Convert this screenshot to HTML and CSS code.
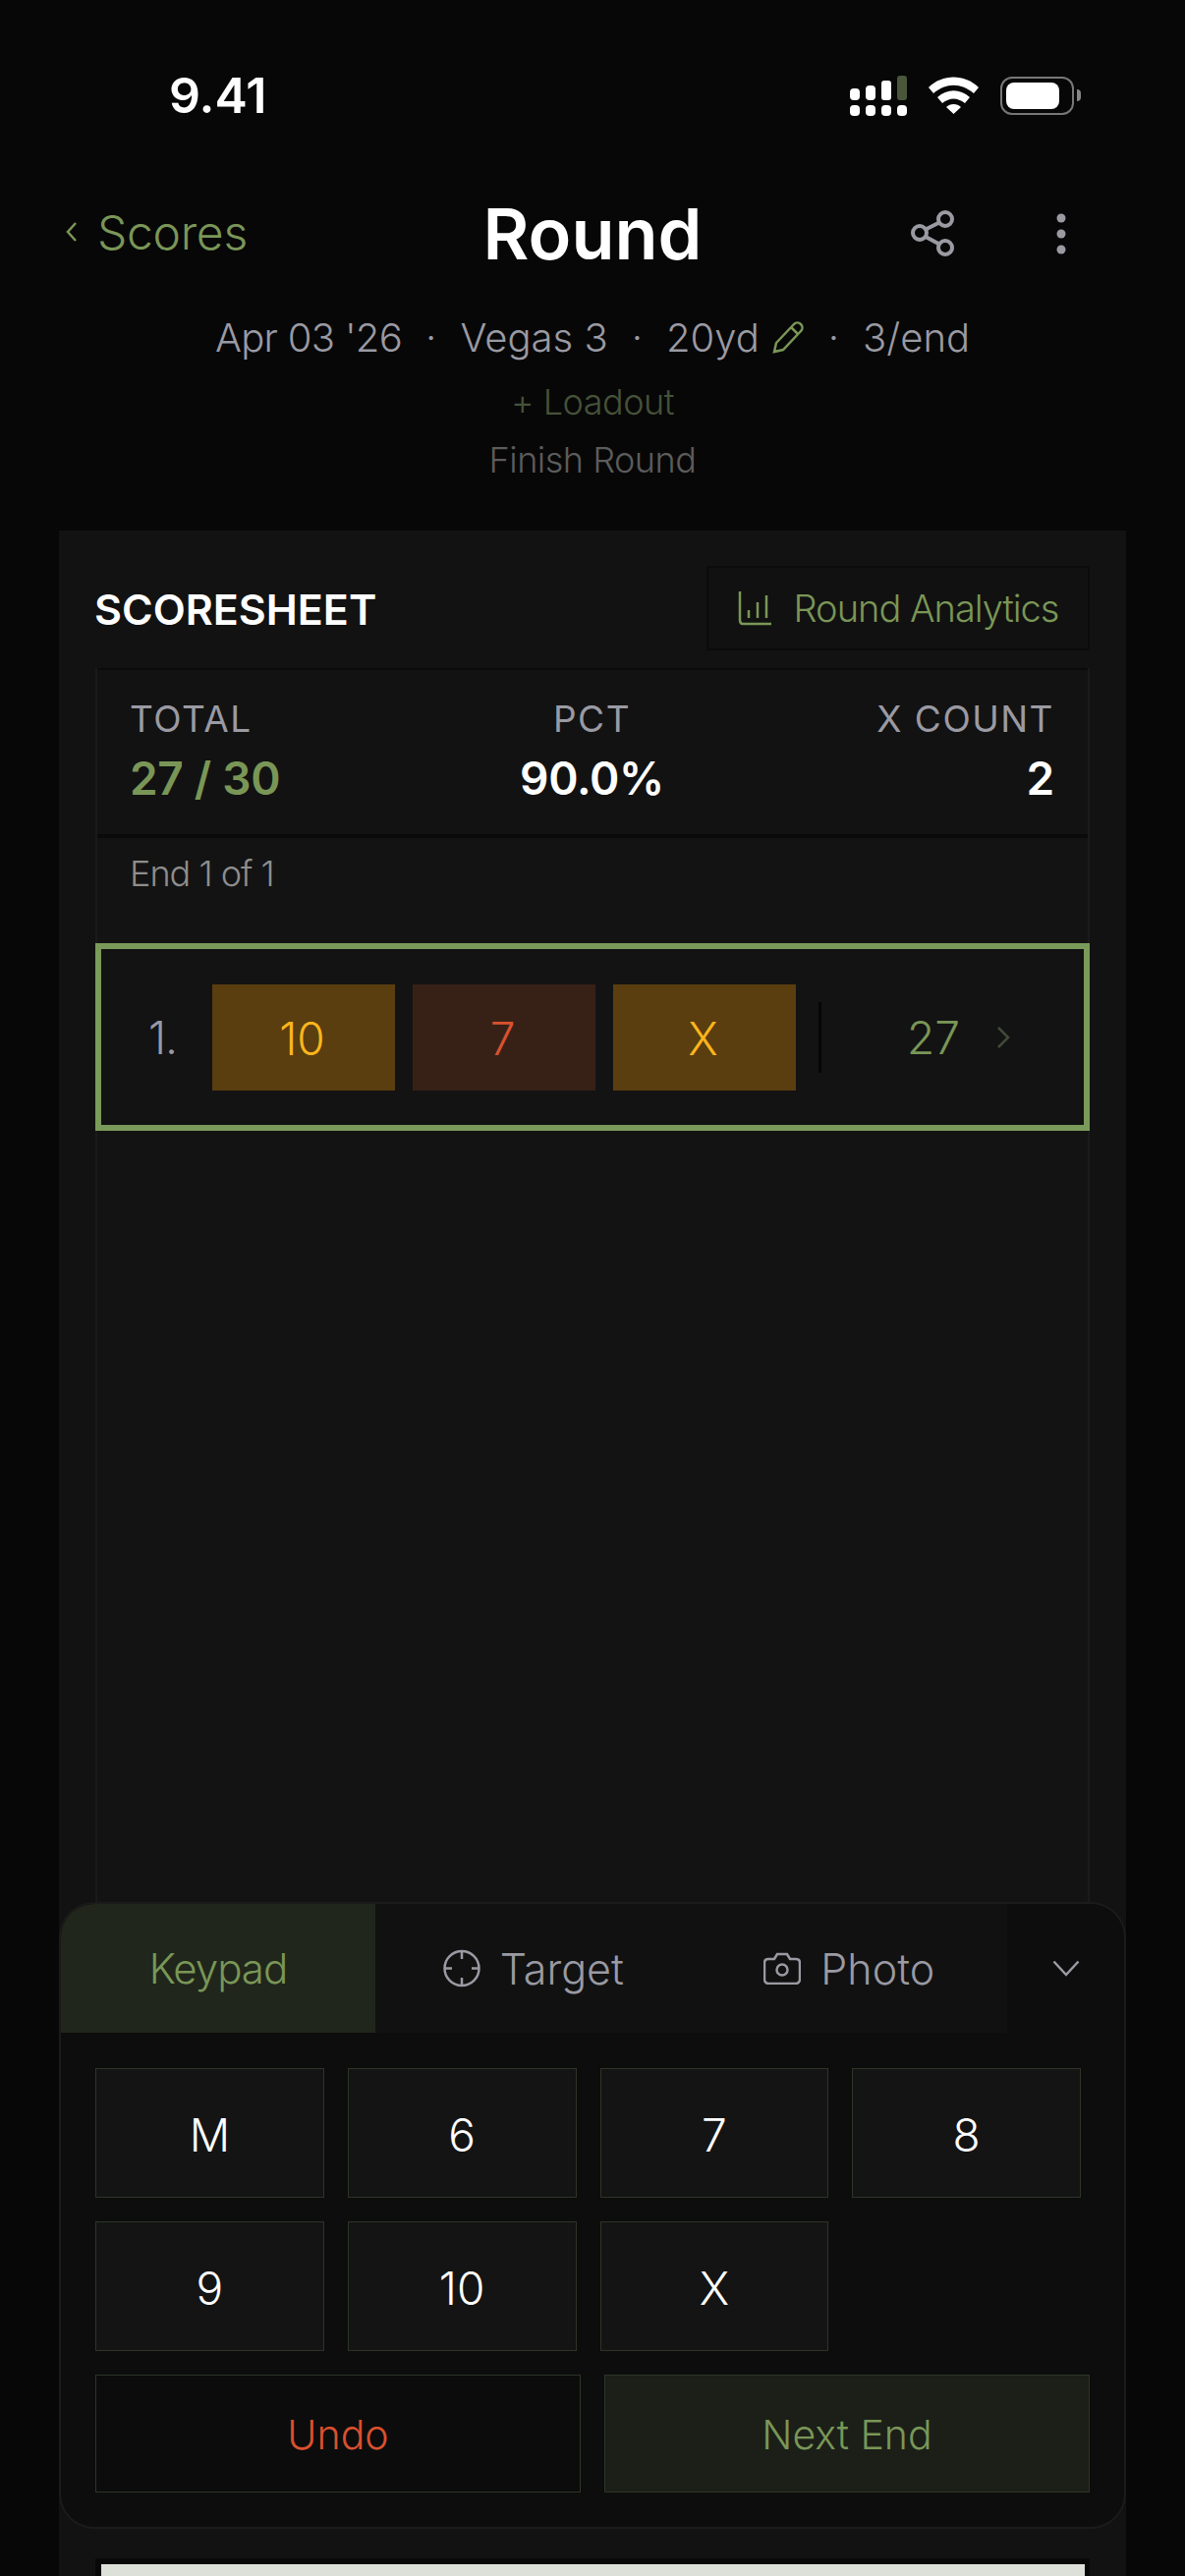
FILE: index.html
```html
<!DOCTYPE html>
<html lang="en">
<head>
    <meta charset="UTF-8">
    <meta name="viewport" content="width=device-width, initial-scale=1.0">
    <title>Round</title>
    <link rel="stylesheet" href="styles.css">
</head>
<body>
    <header class="status">
        <span class="clock">9.41</span>
        <div class="status-icons">
            <svg class="signal" width="58" height="41" viewBox="0 0 58 41">
                <rect x="0" y="13" width="10" height="12" rx="4" fill="#fff"/>
                <rect x="16" y="10" width="10" height="15" rx="4" fill="#fff"/>
                <rect x="32" y="5" width="10" height="20" rx="3" fill="#fff"/>
                <rect x="48" y="0" width="10" height="25" rx="3" fill="#4a573b"/>
                <rect x="0" y="30" width="10" height="11" rx="4" fill="#fff"/>
                <rect x="16" y="30" width="10" height="11" rx="4" fill="#fff"/>
                <rect x="32" y="30" width="10" height="11" rx="4" fill="#fff"/>
                <rect x="48" y="30" width="10" height="11" rx="4" fill="#fff"/>
            </svg>
            <svg class="wifi" width="51" height="38" viewBox="0 0 51 38">
                <path d="M0 11 C14 -3 37 -3 51 11 L46 17 C33 6 18 6 5 17 Z" fill="#fff"/>
                <path d="M9 21 C19 12 32 12 42 21 L37 27 C29 21 22 21 14 27 Z" fill="#fff"/>
                <path d="M18 31 C22 27 29 27 33 31 L25.500 38 Z" fill="#fff"/>
            </svg>
            <div class="battery">
                <div class="battery-body"><div class="battery-fill"></div></div>
                <div class="battery-tip"></div>
            </div>
        </div>
    </header>

    <nav class="topbar">
        <a class="back">
            <svg width="14" height="22" viewBox="0 0 14 22" fill="none"><path d="M11 2 L3 11 L11 20" stroke="#7a9657" stroke-width="2.500"/></svg>
            Scores
        </a>
        <h1 class="title">Round</h1>
        <div class="actions">
            <svg width="46" height="47" viewBox="0 0 46 47" fill="none" stroke="#9a9aa3" stroke-width="4">
                <circle cx="35" cy="9" r="7"/>
                <circle cx="9" cy="23" r="7"/>
                <circle cx="35" cy="38" r="7"/>
                <path d="M15 19.500 L29 12.500 M15 27 L29 34.500"/>
            </svg>
            <svg width="10" height="42" viewBox="0 0 10 42" fill="#9a9aa3">
                <circle cx="5" cy="5" r="4.500"/>
                <circle cx="5" cy="21" r="4.500"/>
                <circle cx="5" cy="37" r="4.500"/>
            </svg>
        </div>
    </nav>

    <div class="meta">
        <span class="date">Apr 03 '26</span><span class="sep">·</span>
        <span>Vegas 3</span><span class="sep">·</span>
        <span>20yd</span>
        <svg class="pencil" width="34" height="34" viewBox="0 0 34 34" fill="none" stroke="#7a9657" stroke-width="2.500">
            <path d="M3 31 L5 22 L23 3 C25 1 28 1 30 3 C32 5 32 8 30 10 L12 29 Z"/>
            <path d="M20 6 L27 13"/>
        </svg>
        <span class="sep">·</span><span>3/end</span>
    </div>
    <div class="loadout">+ Loadout</div>
    <div class="finish">Finish Round</div>

    <main class="card">
        <div class="card-head">
            <h2>SCORESHEET</h2>
            <button class="analytics">
                <svg width="35" height="36" viewBox="0 0 35 36" fill="none" stroke="#7a9657" stroke-width="2.500">
                    <path d="M2 1 V30 C2 32 3 34 5 34 H34"/>
                    <path d="M11 20 V28 M20 12 V28 M29 5 V28"/>
                </svg>
                Round Analytics
            </button>
        </div>

        <section class="sheet">
            <div class="summary">
                <div class="stat">
                    <span class="stat-label">TOTAL</span>
                    <span class="stat-value green">27 / 30</span>
                </div>
                <div class="stat center">
                    <span class="stat-label">PCT</span>
                    <span class="stat-value">90.0%</span>
                </div>
                <div class="stat right">
                    <span class="stat-label">X COUNT</span>
                    <span class="stat-value">2</span>
                </div>
            </div>
            <p class="end-label">End 1 of 1</p>
            <div class="end-row">
                <span class="end-num">1.</span>
                <div class="arrows">
                    <span class="arrow gold">10</span>
                    <span class="arrow red">7</span>
                    <span class="arrow gold">X</span>
                </div>
                <span class="divider"></span>
                <span class="end-total">27</span>
                <svg class="end-chev" width="16" height="24" viewBox="0 0 16 24" fill="none"><path d="M3 2 L13 12 L3 22" stroke="#414b37" stroke-width="2.500"/></svg>
            </div>
        </section>

        <section class="panel">
            <div class="tabs">
                <div class="tab active">Keypad</div>
                <div class="tab">
                    <svg width="38" height="39" viewBox="0 0 38 39" fill="none" stroke="#9a9aa3" stroke-width="2.500">
                        <circle cx="19" cy="19.500" r="17.500"/>
                        <path d="M19 2 V10 M19 29 V37 M2 19.500 H9 M29 19.500 H36"/>
                    </svg>
                    Target
                </div>
                <div class="tab">
                    <svg width="38" height="33" viewBox="0 0 38 33" fill="none" stroke="#9a9aa3" stroke-width="2.500">
                        <path d="M5 7 H11 L14 2 H24 L27 7 H33 C35 7 37 8 37 11 V28 C37 30 35 32 33 32 H5 C3 32 1 30 1 28 V11 C1 8 3 7 5 7 Z"/>
                        <circle cx="19" cy="18" r="5.500"/>
                    </svg>
                    Photo
                </div>
                <div class="tab-toggle">
                    <svg width="28" height="17" viewBox="0 0 28 17" fill="none"><path d="M1.500 1.500 L14 15 L26.500 1.500" stroke="#9a9aa3" stroke-width="2.500"/></svg>
                </div>
            </div>
            <div class="keys">
                <button class="key">M</button>
                <button class="key">6</button>
                <button class="key">7</button>
                <button class="key">8</button>
                <button class="key">9</button>
                <button class="key">10</button>
                <button class="key">X</button>
            </div>
            <div class="panel-actions">
                <button class="undo">Undo</button>
                <button class="next">Next End</button>
            </div>
        </section>

        <div class="photo"><div class="photo-paper"></div></div>
    </main>
</body>
</html>
```

FILE: styles.css
```css
* {
    box-sizing: border-box;
}

body {
    margin: 0;
    height: 2622px;
    overflow: hidden;
    background-color: #070707;
    font-family: Inter, "Noto Sans", sans-serif;
    font-weight: 300;
    color: #9a9aa3;
}

button {
    font-family: inherit;
    font-weight: 300;
    cursor: pointer;
}

/* status bar */
.status {
    height: 194px;
    display: flex;
    justify-content: space-between;
    align-items: center;
    padding: 0 106px 0 172px;
}

.clock {
    font-size: 50px;
    font-weight: 600;
    color: #fff;
}

.status-icons {
    display: flex;
    align-items: center;
    gap: 22px;
}

.battery {
    display: flex;
    align-items: center;
    gap: 3px;
}

.battery-body {
    width: 75px;
    height: 39px;
    padding: 4px 13px 4px 4px;
    border: 2px solid #777;
    border-radius: 12px;
}

.battery-fill {
    height: 100%;
    background-color: #fff;
    border-radius: 8px;
}

.battery-tip {
    width: 4px;
    height: 12px;
    background-color: #888;
    border-radius: 0 4px 4px 0;
}

/* title row */
.topbar {
    height: 86px;
    display: grid;
    grid-template-columns: 1fr auto 1fr;
    align-items: center;
    padding: 0 66px;
}

.back {
    display: flex;
    align-items: center;
    gap: 19px;
    padding-bottom: 3px;
    font-size: 48px;
    letter-spacing: -0.3px;
    color: #7a9657;
}

.title {
    margin: 0;
    font-size: 72px;
    font-weight: 600;
    color: #fff;
}

.actions {
    display: flex;
    justify-content: flex-end;
    align-items: center;
    gap: 102px;
    padding-right: 55px;
}

.meta {
    margin-top: 34px;
    height: 60px;
    display: flex;
    justify-content: center;
    align-items: center;
    font-size: 40px;
    line-height: 60px;
}

.date {
    letter-spacing: -0.7px;
}

.sep {
    margin: 0 24px;
}

.pencil {
    margin-left: 12px;
}

.loadout {
    margin-top: 10px;
    text-align: center;
    font-size: 36px;
    line-height: 50px;
    letter-spacing: -0.5px;
    color: #465239;
}

.finish {
    margin-top: 9px;
    text-align: center;
    font-size: 36px;
    line-height: 50px;
    letter-spacing: -0.5px;
    color: #5c5c5c;
}

/* scoresheet card */
.card {
    margin: 47px 60px 0;
    padding-top: 36px;
    background-color: #121212;
}

.card-head {
    height: 86px;
    margin: 0 37px 18px;
    display: flex;
    justify-content: space-between;
    align-items: center;
}

.card-head h2 {
    margin: 2px 0 0 -1px;
    font-size: 43px;
    font-weight: 600;
    color: #fff;
}

.analytics {
    width: 390px;
    height: 86px;
    display: flex;
    align-items: center;
    justify-content: center;
    gap: 22px;
    background-color: #111;
    border: 2px solid #0b0b0b;
    font-size: 38px;
    letter-spacing: -1px;
    color: #7a9657;
}

.sheet {
    height: 1256px;
    margin: 0 37px;
    background-color: #131313;
    border: solid #1a1a1a;
    border-width: 0 2px;
}

.summary {
    height: 173px;
    padding: 28px 34px 0 33px;
    display: grid;
    grid-template-columns: 1fr 1fr 1fr;
    background-color: #121212;
    border-top: 2px solid #0b0b0b;
    border-bottom: 4px solid #0a0a0a;
}

.stat {
    display: flex;
    flex-direction: column;
    gap: 10px;
}

.stat.center {
    text-align: center;
}

.stat.right {
    text-align: right;
}

.stat-label {
    font-size: 37px;
    font-weight: 400;
    line-height: 44px;
    letter-spacing: 1.500px;
}

.stat-value {
    font-size: 46px;
    font-weight: 600;
    line-height: 56px;
    letter-spacing: -0.3px;
    color: #fff;
}

.stat-value.green {
    color: #7a9657;
}

.end-label {
    margin: 0;
    height: 107px;
    padding: 11px 33px 0;
    font-size: 36px;
    line-height: 50px;
    letter-spacing: -1px;
    color: #8e8e8e;
}

.end-row {
    height: 191px;
    margin: 0 -2px;
    display: flex;
    align-items: center;
    padding-left: 48px;
    border: 6px solid #7a9a5a;
    background-color: #131313;
}

.end-num {
    width: 65px;
    font-size: 46px;
    letter-spacing: -1px;
    color: #9a9aa3;
}

.arrows {
    display: flex;
    gap: 18px;
}

.arrow {
    width: 186px;
    height: 108px;
    display: flex;
    align-items: center;
    justify-content: center;
    padding: 3px 3px 0 0;
    font-size: 46px;
}

.arrow.gold {
    background-color: #5a3e10;
    color: #fdb51c;
}

.arrow.red {
    background-color: #372117;
    color: #d9512f;
}

.divider {
    width: 3px;
    height: 72px;
    margin-left: 23px;
    background-color: #060606;
}

.end-total {
    margin-left: 87px;
    font-size: 46px;
    color: #7a9657;
}

.end-chev {
    margin-left: 36px;
}

/* input panel over the sheet */
.panel {
    height: 638px;
    background-color: #0d0d0d;
    border: 2px solid #1b1b1b;
    border-radius: 36px;
    overflow: hidden;
}

.tabs {
    height: 131px;
    display: grid;
    grid-template-columns: 320px 1fr 1fr 119px;
}

.tab {
    display: flex;
    align-items: center;
    justify-content: center;
    gap: 20px;
    background-color: #111;
    font-size: 43px;
}

.tab.active {
    background-color: #20261b;
    font-size: 42px;
    letter-spacing: -1px;
    color: #7a9657;
}

.tab-toggle {
    display: flex;
    align-items: center;
    justify-content: center;
}

.keys {
    margin: 36px 44px 0 35px;
    display: grid;
    grid-template-columns: repeat(4, 1fr);
    gap: 24px;
}

.key {
    height: 132px;
    padding-top: 4px;
    background-color: #141414;
    border: 1px solid #2d3526;
    font-size: 46px;
    color: #fff;
}

.panel-actions {
    margin: 24px 35px 0;
    display: grid;
    grid-template-columns: 1fr 1fr;
    gap: 24px;
}

.panel-actions button {
    height: 120px;
    padding-top: 3px;
    border: 1px solid #2d3526;
    font-size: 41px;
}

.undo {
    background-color: #0c0c0c;
    color: #d9512f;
}

.next {
    background-color: #1b1f18;
    color: #7a9657;
}

.photo {
    margin: 30px 37px 0;
    height: 18px;
    padding: 6px 5px 0 6px;
    background-color: #080808;
}

.photo-paper {
    height: 100%;
    background-color: #dddfd9;
}
```
